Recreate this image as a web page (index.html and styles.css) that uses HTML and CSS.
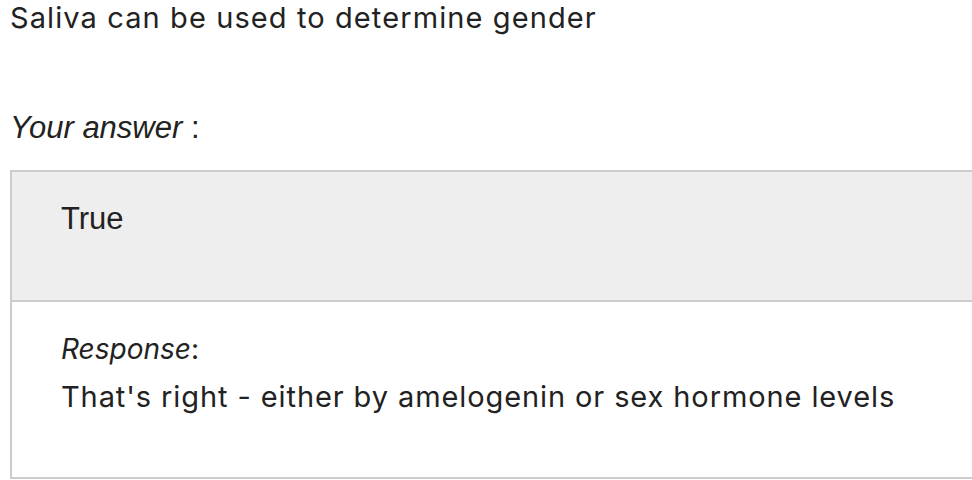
FILE: index.html
```html
<!DOCTYPE html>
<html>
<head>
<meta charset="utf-8">
<link rel="stylesheet" href="styles.css">
</head>
<body>
<div class="page">
  <p class="question">Saliva can be used to determine gender</p>
  <p class="label"><em>Your answer</em> :</p>
  <div class="box">
    <div class="answer">True</div>
    <div class="feedback">
      <div class="resp"><em>Response</em>:</div>
      <div class="resp-text">That's right - either by amelogenin or sex hormone levels</div>
    </div>
  </div>
</div>
</body>
</html>
```
FILE: styles.css
```css
html, body { margin: 0; padding: 0; background: #fff; }
body { overflow: hidden; }
.page { padding: 0 0 0 10px; color: #222; font-family: Inter, "Noto Sans", sans-serif; }
.question { margin: 0; font-size: 29px; line-height: 36px; letter-spacing: 1.1px; }
.label { margin: 74px 0 0 0; font-family: "Liberation Sans", Arial, sans-serif; font-size: 31px; line-height: 36px; }
.label em { font-style: italic; }
.box { margin-top: 24px; border: 2px solid #ccc; border-right: none; width: 1000px; }
.answer { background: #eee; height: 130px; padding: 29px 0 0 49px; box-sizing: border-box; font-family: "Liberation Sans", Arial, sans-serif; font-size: 31px; line-height: 36px; border-bottom: 2px solid #ccc; }
.feedback { padding: 30px 0 0 49px; height: 175px; box-sizing: border-box; }
.resp { font-size: 28px; line-height: 34px; }
.resp em { font-style: italic; }
.resp-text { margin-top: 13px; font-size: 29px; line-height: 36px; letter-spacing: 0.9px; }
```
